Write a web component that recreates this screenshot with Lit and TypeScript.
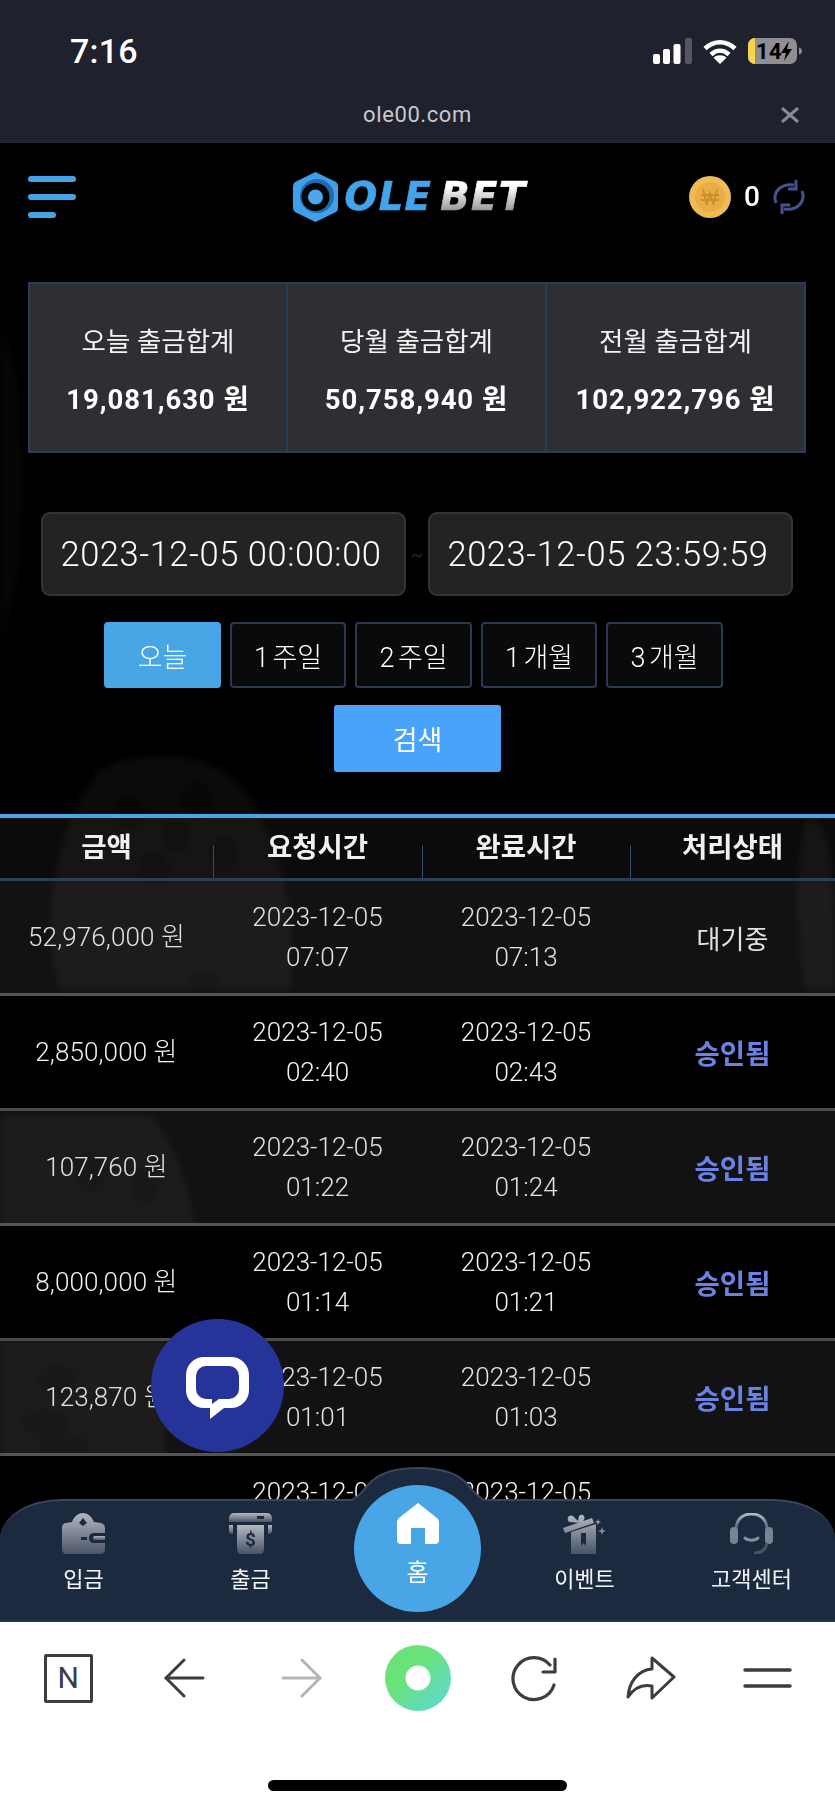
import { LitElement, html, css, svg } from "lit";
import { customElement } from "lit/decorators.js";

interface Row { amount: string; d1: string; t1: string; d2: string; t2: string; status: string; done: boolean; }
const rows: Row[] = [
  { amount: "52,976,000 원", d1: "2023-12-05", t1: "07:07", d2: "2023-12-05", t2: "07:13", status: "대기중", done: false },
  { amount: "2,850,000 원", d1: "2023-12-05", t1: "02:40", d2: "2023-12-05", t2: "02:43", status: "승인됨", done: true },
  { amount: "107,760 원", d1: "2023-12-05", t1: "01:22", d2: "2023-12-05", t2: "01:24", status: "승인됨", done: true },
  { amount: "8,000,000 원", d1: "2023-12-05", t1: "01:14", d2: "2023-12-05", t2: "01:21", status: "승인됨", done: true },
  { amount: "123,870 원", d1: "2023-12-05", t1: "01:01", d2: "2023-12-05", t2: "01:03", status: "승인됨", done: true },
  { amount: "1,000,000 원", d1: "2023-12-05", t1: "00:40", d2: "2023-12-05", t2: "00:44", status: "승인됨", done: true },
];
const stats = [
  ["오늘 출금합계", "19,081,630 원"],
  ["당월 출금합계", "50,758,940 원"],
  ["전월 출금합계", "102,922,796 원"],
];
const ranges = ["오늘", "1 주일", "2 주일", "1 개월", "3 개월"];

const grad = (id: string) => svg`<defs><linearGradient id=${id} x1="0" y1="0" x2="0" y2="1"><stop offset="0" stop-color="#b4b7bf"/><stop offset="1" stop-color="#4a5468"/></linearGradient></defs>`;

@customElement("app-root")
export class AppRoot extends LitElement {
  static styles = css`
    :host { display: block; width: 835px; height: 1809px; overflow: hidden; position: relative; background: #fff;
      font-family: Roboto, "Noto Sans CJK KR", sans-serif; color: #fff; }
    * { box-sizing: border-box; }
    .frame { display: flex; flex-direction: column; height: 1809px; }
    .ios { height: 143px; background: #1f212e; flex: none; display: flex; flex-direction: column; border-bottom: 1px solid #262833; }
    .status { height: 88px; padding: 32px 32px 0 70px; display: flex; justify-content: space-between; align-items: flex-start; }
    .time { font: 500 34px/38px Roboto, sans-serif; letter-spacing: .2px; }
    .sys-icons { display: flex; gap: 11px; align-items: center; margin-top: 6px; }
    .url-row { height: 54px; display: flex; justify-content: center; align-items: center; position: relative; padding-bottom: 1px; }
    .url { font: 400 22px/28px Roboto, sans-serif; color: #c9c9cd; letter-spacing: .6px; }
    .close { position: absolute; right: 36px; top: 19px; }
    .sys { display: block; }

    .main { flex: 1; position: relative; overflow: hidden; background: #000; min-height: 0; }
    .dice { position: absolute; inset: 0; }
    .dice-g { filter: blur(3px); }
    .content { position: relative; display: flex; flex-direction: column; }
    .head { height: 139px; padding: 33px 30px 0 28px; display: grid; grid-template-columns: 1fr auto 1fr; align-items: start; }
    .burger { width: 48px; height: 42px; display: flex; flex-direction: column; justify-content: space-between; }
    .burger i { display: block; height: 6px; border-radius: 3px; background: #46a3e6; }
    .burger i:last-child { width: 28px; }
    .logo { display: flex; align-items: center; gap: 7px; height: 50px; margin-top: -4px; margin-right: 11px; }
    .logo-text { font: italic 700 38.5px/40px "DejaVu Sans", sans-serif; letter-spacing: 1.4px; display: flex; gap: 5px; -webkit-text-stroke: .7px transparent; }
    .ole, .bet { -webkit-background-clip: text; background-clip: text; color: transparent; padding-right: 3px; }
    .ole { background-image: linear-gradient(#42a4ea, #42a4ea); }
    .bet { background-image: linear-gradient(#ffffff 25%, #8c8c8c 90%); }
    .wallet { display: flex; align-items: center; height: 42px; gap: 9px; justify-self: end; }
    .zero { font: 500 28px/42px Roboto, sans-serif; width: 24px; text-align: center; }

    .stats { margin: 0 29px 0 28px; height: 171px; display: grid; grid-template-columns: 258px 259px 1fr; background: #2d2f33; border: 2px solid #2a3c5a; }
    .stat { display: flex; flex-direction: column; align-items: center; justify-content: flex-start; padding-top: 38px; border-right: 2px solid #2a3c5a; }
    .stat:last-child { border-right: 0; }
    .stat-l { font-size: 26.5px; line-height: 40px; color: #f2f2f2; }
    .stat-v { font-size: 27.5px; line-height: 40px; font-weight: 700; margin-top: 18px; letter-spacing: .95px; white-space: nowrap; }

    .dates { margin: 59px 42px 0 41px; display: flex; justify-content: space-between; align-items: center; height: 84px; }
    .date { width: 365px; height: 84px; background: #222324; border: 2px solid #343537; border-radius: 9px; display: flex; align-items: center; justify-content: center;
      font-size: 34.5px; font-weight: 300; letter-spacing: .55px; padding-right: 5px; }
    .tilde { color: #2a2a2a; font-size: 18px; }
    .quick { margin-top: 26px; display: flex; justify-content: center; gap: 9px; padding-right: 8px; }
    .q { width: 116.5px; height: 66px; border: 2px solid #2b3954; border-radius: 4px; background: #0a0a0a; display: flex; align-items: center; justify-content: center; font-size: 27px; font-weight: 300; word-spacing: -3px; }
    .q.on { background: #48a6e6; border-color: #48a6e6; }
    .search-wrap { display: flex; justify-content: center; margin-top: 17px; }
    .search { width: 167px; height: 67px; border-radius: 3px; background: #4aa3fb; display: flex; align-items: center; justify-content: center; font-size: 27px; }

    .table { margin-top: 42px; border-top: 4px solid #48a6e6; }
    .thead, .tr { display: grid; grid-template-columns: 213px 209px 208px 1fr; }
    .thead { height: 63px; border-bottom: 3px solid #2f3d5c; background: rgba(255,255,255,.045); }
    .th { position: relative; text-align: center; font-weight: 700; font-size: 27.5px; line-height: 60px; color: #f0f0f0; }
    .th + .th::before { content: ""; position: absolute; left: 0; bottom: 0; height: 33px; width: 1px; background: #3a4a6c; }
    .tr { height: 115px; border-bottom: 3px solid #4a4a4a; align-items: center; text-align: center; }
    .tr:nth-child(odd) { background: rgba(255,255,255,.07); color: #e2e2e2; border-bottom-color: #555; }
    .tr:nth-child(even) { background: #000; color: #f0f0f0; }
    .tr .c { font-size: 26px; line-height: 40px; font-weight: 300; }
    .tr .c.amt { font-size: 26px; letter-spacing: .1px; font-weight: 300; }
    .st { font-size: 26px; font-weight: 400; }
    .st.ok { color: #6a82e2; font-weight: 700; font-size: 27.5px; }

    .fab { position: absolute; left: 151px; top: 1319px; width: 133px; height: 133px; border-radius: 50%; background: #26349a; display: flex; align-items: center; justify-content: center; padding-top: 5px; }

    .nav-bump { position: absolute; left: 351px; top: 1467px; display: block; }
    .nav { position: absolute; left: 0; right: 0; top: 1499px; height: 123px; background: #1c2a40; border-top: 2px solid #39465c; border-bottom: 2px solid #26344c; border-radius: 62px 62px 0 0 / 40px 40px 0 0; display: grid; grid-template-columns: repeat(5, 1fr); }
    .nav-item { display: flex; flex-direction: column; align-items: center; padding-top: 12px; font-size: 22px; line-height: 30px; color: #f4f4f4; gap: 11px; }
    .nav-item svg { display: block; }
    .home { position: absolute; left: 354px; top: 1485px; width: 127px; height: 127px; border-radius: 50%; background: #48a6e6; display: flex; flex-direction: column; align-items: center; padding-top: 18px; font-size: 24px; line-height: 30px; gap: 14px; }

    .browser { height: 187px; flex: none; background: #fff; position: relative; display: flex; flex-direction: column; }
    .tools { height: 112px; padding-left: 10px; display: grid; grid-template-columns: repeat(7, 116.5px); justify-items: center; align-items: center; }
    .n { width: 49px; height: 49px; border: 3px solid #3a3d42; border-radius: 2px; display: flex; align-items: center; justify-content: center; color: #3a3d42; font: 400 30px/1 Roboto, sans-serif; }
    .flip { transform: scaleX(-1); }
    .indicator { margin: 46px auto 0; width: 299px; height: 11px; border-radius: 6px; background: #000; }
  `;

  private signal() {
    return html`<svg class="sys" width="39" height="26" viewBox="0 0 39 26">
      <rect x="0" y="16" width="7" height="10" rx="2" fill="#fff"/><rect x="10" y="11" width="7" height="15" rx="2" fill="#fff"/>
      <rect x="20.500" y="6" width="7" height="20" rx="2" fill="#fff"/><rect x="32" y="0" width="7" height="26" rx="2" fill="#55565f"/></svg>`;
  }
  private wifi() {
    return html`<svg class="sys" width="34" height="25" viewBox="0 0 34 25" fill="none" stroke="#fff" stroke-width="4.500">
      <path d="M2 9.500C11 1 23 1 32 9.500"/><path d="M8 15.500C13.500 10.500 20.500 10.500 26 15.500"/><path d="M17 25L10.500 18.700C14 15.500 20 15.500 23.500 18.700Z" fill="#fff" stroke="none"/></svg>`;
  }
  private battery() {
    return html`<svg class="sys" width="55" height="26" viewBox="0 0 55 26">
      <rect x="0" y="0" width="49" height="26" rx="7" fill="#8e8e93"/>
      <path d="M7 0v26H7a7 7 0 0 1-7-7V7a7 7 0 0 1 7-7Z" fill="#f7d44a"/>
      <path d="M51 9.500c2 .5 3 2 3 3.500s-1 3-3 3.500Z" fill="#8e8e93"/>
      <text x="8" y="21" font-family="Roboto" font-weight="700" font-size="22" letter-spacing=".5" fill="#000">14</text>
      <path d="M41 3L33 15h5l-2 8 8-12h-5Z" fill="#000"/></svg>`;
  }
  private coin() {
    return html`<svg width="42" height="42" viewBox="0 0 42 42">
      <circle cx="21" cy="21" r="21" fill="#efbb55"/><circle cx="21" cy="21" r="15" fill="#e8ae45"/>
      <path d="M14 13l3.500 16 3.500-12 3.500 12 3.500-16M12 19h18M12 24h18" fill="none" stroke="#cb8f2e" stroke-width="1.800"/></svg>`;
  }
  private refresh() {
    return html`<svg width="32" height="36" viewBox="0 0 32 36" fill="none" stroke="#45528f" stroke-width="3">
      <path d="M3 24C-1 13 8 4 21 6"/><path d="M23 1v9h-8"/><path d="M29 12c4 11-5 20-18 18"/><path d="M9 35v-9h8"/></svg>`;
  }
  private hex() {
    return html`<svg width="45" height="50" viewBox="0 0 45 50">
      <path d="M22.500 0L42 9.500Q45 11 45 14.500V35.500Q45 39 42 40.500L22.500 50L3 40.500Q0 39 0 35.500V14.500Q0 11 3 9.500Z" fill="#3f9fe8"/>
      <circle cx="24" cy="24" r="17" fill="#2568ad"/><circle cx="22.500" cy="25" r="14" fill="#050505"/>
      <circle cx="22.500" cy="25" r="7.500" fill="#4ba8ee"/></svg>`;
  }
  private back(color: string, flip = false) {
    return html`<svg class=${flip ? "flip" : ""} width="41" height="40" viewBox="0 0 41 40" fill="none" stroke=${color} stroke-width="3" stroke-linecap="round" stroke-linejoin="round">
      <path d="M20 2L2 20L20 38"/><path d="M2 20H39"/></svg>`;
  }

  render() {
    return html`
      <div class="frame">
        <div class="ios">
          <div class="status">
            <span class="time">7:16</span>
            <div class="sys-icons">${this.signal()}${this.wifi()}${this.battery()}</div>
          </div>
          <div class="url-row">
            <span class="url">ole00.com</span>
            <svg class="close" width="18" height="16" viewBox="0 0 18 16" stroke="#8a8b90" stroke-width="3"><path d="M1 1L17 15M17 1L1 15"/></svg>
          </div>
        </div>

        <div class="main">
          <svg class="dice" width="835" height="1479" viewBox="0 143 835 1479" fill="none">
            <g class="dice-g">
              <g opacity=".085" fill="#8c8068">
                <path d="M100 770C140 750 200 750 235 780C270 815 300 900 290 990L60 990C40 930 50 830 100 770Z"/>
                <path d="M0 1115H150C175 1140 190 1190 195 1226H0Z"/>
                <path d="M0 1341H165V1456H0Z"/>
                <path d="M805 820C830 815 835 850 835 990H805C795 930 795 870 805 820Z"/>
              </g>
              <g opacity=".04" fill="#8c8068">
                <path d="M0 330C26 350 36 560 0 640Z"/>
              </g>
              <g fill="#000" opacity=".3">
                <ellipse cx="197" cy="800" rx="15" ry="18"/><ellipse cx="130" cy="813" rx="15" ry="18"/><ellipse cx="176" cy="835" rx="15" ry="18"/>
                <ellipse cx="224" cy="855" rx="15" ry="18"/><ellipse cx="154" cy="870" rx="15" ry="18"/><ellipse cx="205" cy="983" rx="16" ry="12"/>
                <ellipse cx="90" cy="1172" rx="16" ry="20"/><ellipse cx="145" cy="1185" rx="14" ry="18"/>
                <ellipse cx="58" cy="1380" rx="20" ry="14"/><ellipse cx="45" cy="1423" rx="24" ry="14"/><ellipse cx="64" cy="1446" rx="26" ry="12"/>
              </g>
            </g>
          </svg>
          <div class="content">
            <div class="head">
              <div class="burger"><i></i><i></i><i></i></div>
              <div class="logo">${this.hex()}<div class="logo-text"><span class="ole">OLE</span><span class="bet">BET</span></div></div>
              <div class="wallet">${this.coin()}<span class="zero">0</span>${this.refresh()}</div>
            </div>
            <div class="stats">
              ${stats.map(([l, v]) => html`<div class="stat"><div class="stat-l">${l}</div><div class="stat-v">${v}</div></div>`)}
            </div>
            <div class="dates">
              <div class="date">2023-12-05 00:00:00</div><span class="tilde">~</span><div class="date">2023-12-05 23:59:59</div>
            </div>
            <div class="quick">
              ${ranges.map((r, i) => html`<div class="q ${i === 0 ? "on" : ""}">${r}</div>`)}
            </div>
            <div class="search-wrap"><div class="search">검색</div></div>
            <div class="table">
              <div class="thead"><div class="th">금액</div><div class="th">요청시간</div><div class="th">완료시간</div><div class="th">처리상태</div></div>
              <div>
                ${rows.map((r) => html`<div class="tr">
                  <div class="c amt">${r.amount}</div>
                  <div class="c">${r.d1}<br />${r.t1}</div>
                  <div class="c">${r.d2}<br />${r.t2}</div>
                  <div class="st ${r.done ? "ok" : ""}">${r.status}</div>
                </div>`)}
              </div>
            </div>
          </div>
        </div>

        <div class="browser">
          <div class="tools">
            <div class="n">N</div>
            ${this.back("#3a3d42")}
            ${this.back("#b5b5b5", true)}
            <svg width="66" height="66" viewBox="0 0 66 66"><defs><linearGradient id="gr" x1="0" y1="0" x2="1" y2="1"><stop offset=".4" stop-color="#6ae27a"/><stop offset="1" stop-color="#5cd6e0"/></linearGradient></defs>
              <circle cx="33" cy="33" r="33" fill="url(#gr)"/><circle cx="33" cy="33" r="12.500" fill="#fff"/></svg>
            <svg width="46" height="47" viewBox="0 0 46 47" fill="none" stroke="#3a3d42" stroke-width="3.200" stroke-linecap="round" stroke-linejoin="round">
              <path d="M43 30A21 21 0 1 1 39 10"/><path d="M44 4V17H32"/></svg>
            <svg width="50" height="44" viewBox="0 0 50 44" fill="none" stroke="#3a3d42" stroke-width="3" stroke-linecap="round" stroke-linejoin="round">
              <path d="M26 2L48 21L26 42V30C16 28 8 32 2 41C3 26 12 14 26 13Z"/></svg>
            <svg width="49" height="20" viewBox="0 0 49 20" stroke="#3a3d42" stroke-width="3.500" stroke-linecap="round"><path d="M2 2H47M2 18H47"/></svg>
          </div>
          <div class="indicator"></div>
        </div>
      </div>

      <div class="fab">
        <svg width="63" height="62" viewBox="0 0 63 62"><path fill-rule="evenodd" d="M18 0H45A18 18 0 0 1 63 18V33A18 18 0 0 1 45 51H38L24 62V51H18A18 18 0 0 1 0 33V18A18 18 0 0 1 18 0ZM20 9A10 10 0 0 0 10 19V32A10 10 0 0 0 20 42H26V47L33 42H43A10 10 0 0 0 53 32V19A10 10 0 0 0 43 9Z" fill="#fff"/></svg>
      </div>

      <nav class="nav">
        <div class="nav-item">
          <svg width="43" height="41" viewBox="0 0 43 41">${grad("g1")}<path fill-rule="evenodd" fill="url(#g1)" d="M4 10L10 9C12 3 17 0 21 0C26 0 30 4 32 9L39 10C41 11 43 12 43 15V20H32C28 20 27 23 27 25C27 28 29 30 32 30H43V36C43 39 41 41 38 41H5C2 41 0 39 0 36V14C0 12 2 10 4 10ZM21 5L17 10L21 13L25 10ZM19 24V27H25V24Z"/><path fill="url(#g1)" d="M33 23H43V27H33A2 2 0 0 1 33 23Z"/></svg>
          <span>입금</span>
        </div>
        <div class="nav-item">
          <svg width="43" height="41" viewBox="0 0 43 41">${grad("g2")}<path fill-rule="evenodd" fill="url(#g2)" d="M5 0H38A5 5 0 0 1 43 5V9H0V5A5 5 0 0 1 5 0ZM28 3V6H35V3Z"/><path fill="url(#g2)" d="M0 12H4V21H3C1 21 0 19 0 18ZM39 12H43V18C43 19 42 21 40 21H39Z"/><path fill="url(#g2)" d="M8 12H35V36C35 39 33 41 31 41H12C10 41 8 39 8 36Z"/><text x="21.500" y="33" text-anchor="middle" font-family="Roboto" font-weight="700" font-size="19" fill="#1c2a40">$</text></svg>
          <span>출금</span>
        </div>
        <div></div>
        <div class="nav-item">
          <svg width="43" height="41" viewBox="0 0 43 41">${grad("g3")}<path fill="url(#g3)" d="M8 19L33 11V41H8ZM0 15L29 5L31 10L2 20ZM6 9C3 5 6 1 10 3L15 8L16 3C19 0 23 3 21 7L18 10Z"/><path d="M18 20V33L20.500 30L23 33V20Z" fill="#1c2a40"/><path fill="#8a90a0" d="M39 14L40 17L43 18L40 19L39 22L38 19L35 18L38 17ZM35 6L36 8L38 9L36 10L35 12L34 10L32 9L34 8Z"/></svg>
          <span>이벤트</span>
        </div>
        <div class="nav-item">
          <svg width="43" height="41" viewBox="0 0 43 41" fill="none">${grad("g4")}<path stroke="url(#g4)" stroke-width="3" d="M6 17C6 6 13 1 21.500 1S37 6 37 17"/><rect x="0" y="14" width="8" height="17" rx="4" fill="#7b8292"/><rect x="35" y="14" width="8" height="17" rx="4" fill="#7b8292"/><path stroke="#8a90a0" stroke-width="3" stroke-linecap="round" d="M15 25C18 28 25 28 28 25"/><path stroke="#4a5468" stroke-width="3" d="M37 30C36 36 32 40 24 40"/></svg>
          <span>고객센터</span>
        </div>
      </nav>
      <svg class="nav-bump" width="134" height="36" viewBox="0 0 134 36">
        <path d="M0 33C10 30 14 19 22 13C33 4 50 1 67 1C84 1 101 4 112 13C120 19 124 30 134 33V36H0Z" fill="#1c2a40"/>
        <path d="M0 33C10 30 14 19 22 13C33 4 50 1 67 1C84 1 101 4 112 13C120 19 124 30 134 33" fill="none" stroke="#39465c" stroke-width="2"/>
      </svg>
      <div class="home">
        <svg width="42" height="41" viewBox="0 0 42 41"><path fill="#fff" fill-rule="evenodd" d="M21 0L40 15Q42 17 42 19V37Q42 41 38 41H28V25H14V41H4Q0 41 0 37V19Q0 17 2 15Z"/></svg>
        <span>홈</span>
      </div>
    `;
  }
}
